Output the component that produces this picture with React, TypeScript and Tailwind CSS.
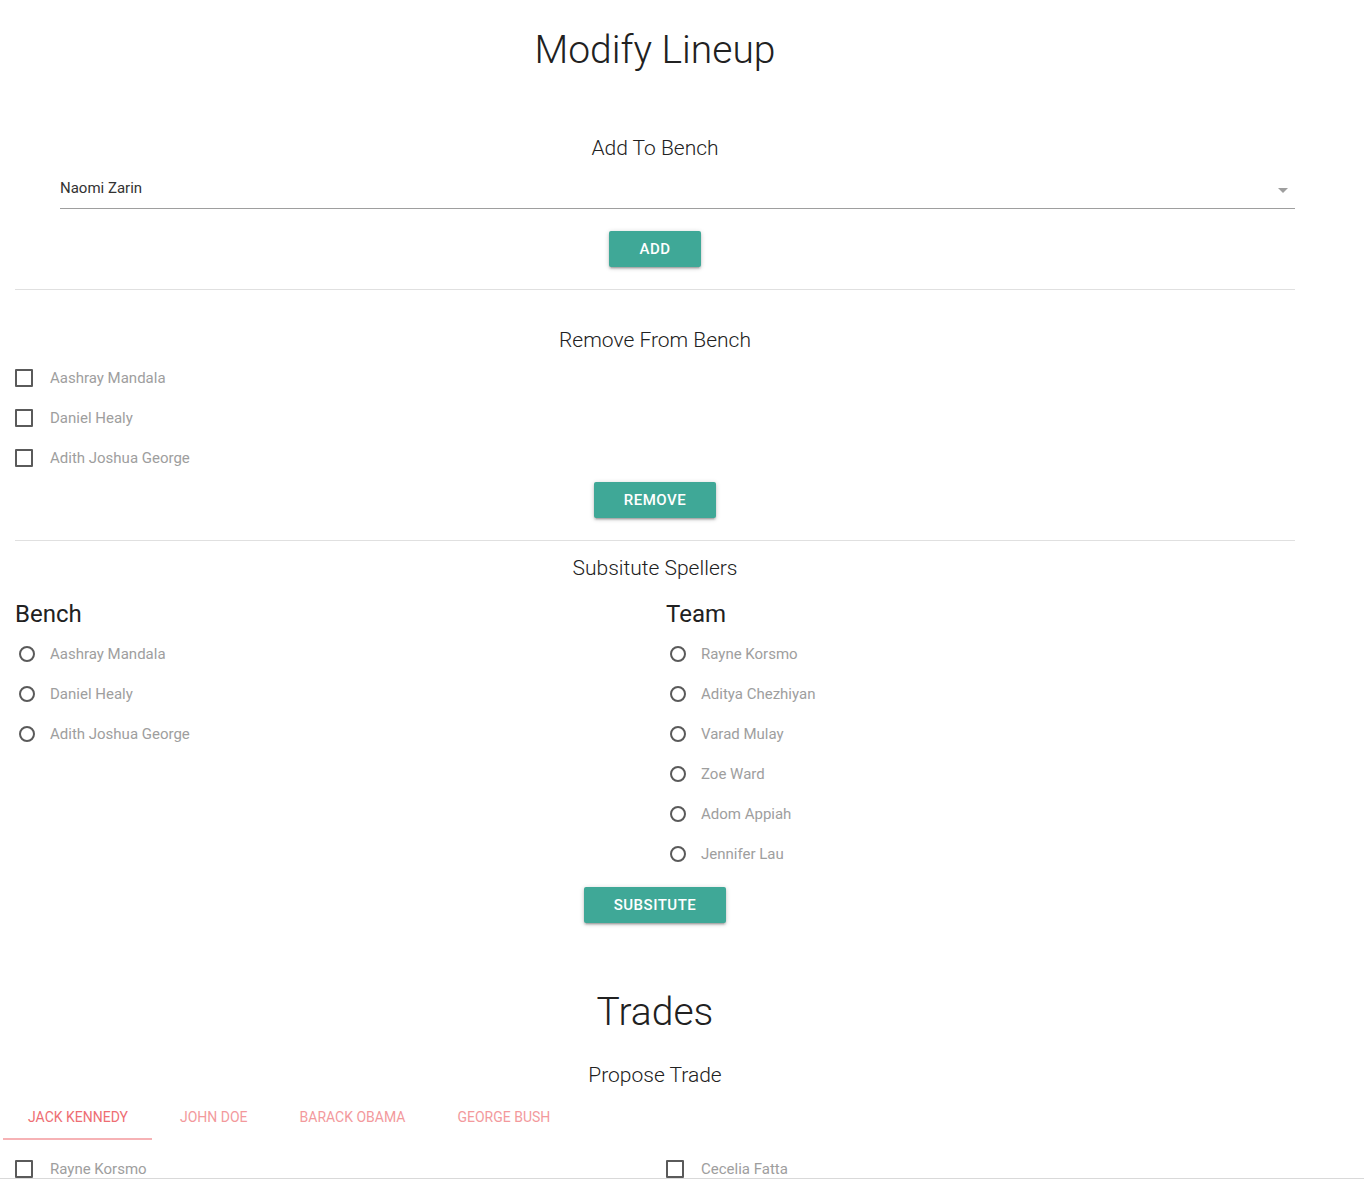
const bench = ["Aashray Mandala", "Daniel Healy", "Adith Joshua George"];
const team = ["Rayne Korsmo", "Aditya Chezhiyan", "Varad Mulay", "Zoe Ward", "Adom Appiah", "Jennifer Lau"];
const tabs = ["Jack Kennedy", "John Doe", "Barack Obama", "George Bush"];

const Checkbox = ({ label }: { label: string }) => (
  <label className="h-10 flex items-center">
    <span className="w-[18px] h-[18px] border-2 border-[#5a5a5a] rounded-[1px]" />
    <span className="ml-[17px] text-[15px] text-[#9e9e9e]">{label}</span>
  </label>
);

const Radio = ({ label }: { label: string }) => (
  <label className="h-10 flex items-center">
    <span className="ml-1 w-4 h-4 border-2 border-[#5a5a5a] rounded-full" />
    <span className="ml-[15px] text-[15px] text-[#9e9e9e]">{label}</span>
  </label>
);

const Button = ({ children }: { children: string }) => (
  <div className="flex justify-center">
    <button className="h-9 px-[30px] rounded-[2px] bg-[#3fa897] text-white text-[15px] font-medium uppercase tracking-[0.5px] shadow-[0_2px_2px_0_rgba(0,0,0,0.14),0_3px_1px_-2px_rgba(0,0,0,0.12),0_1px_5px_0_rgba(0,0,0,0.2)]">
      {children}
    </button>
  </div>
);

const Title = ({ children, className }: { children: string; className: string }) => (
  <h5 className={`flex items-center justify-center text-[21px] font-light text-[#212121] ${className}`}>{children}</h5>
);

export default function App() {
  return (
    <div className="w-[1364px] h-[1199px] bg-white font-['Roboto',sans-serif]">
      <div className="h-[1179px] overflow-hidden border-b border-[#d9d9d9]">
        <div className="w-[1280px] ml-[15px]">
          <h1 className="h-[100px] flex items-center justify-center text-[39px] font-light text-[#212121]">Modify Lineup</h1>

          <Title className="mt-[29px] h-[39px]">Add To Bench</Title>
          <div className="ml-[45px] h-[41px] border-b border-[#9e9e9e] flex items-center justify-between">
            <span className="text-[15px] text-[#333]">Naomi Zarin</span>
            <span className="mr-[7px] mt-1 w-0 h-0 border-x-[5px] border-x-transparent border-t-[5px] border-t-[#9e9e9e]" />
          </div>
          <div className="mt-[22px]">
            <Button>Add</Button>
          </div>
          <div className="mt-[22px] border-t border-[#e0e0e0]" />

          <Title className="mt-[31px] h-10">Remove From Bench</Title>
          <div className="-mt-[3px]">
            {bench.map((n) => (
              <Checkbox key={n} label={n} />
            ))}
          </div>
          <div className="mt-1">
            <Button>Remove</Button>
          </div>
          <div className="mt-[22px] border-t border-[#e0e0e0]" />

          <Title className="h-[56px]">Subsitute Spellers</Title>
          <div className="-mt-px grid grid-cols-[651px_1fr]">
            <div>
              <h4 className="h-9 flex items-center text-[24px] text-[#212121]">Bench</h4>
              <div className="mt-0.5">
                {bench.map((n) => (
                  <Radio key={n} label={n} />
                ))}
              </div>
            </div>
            <div>
              <h4 className="h-9 flex items-center text-[24px] text-[#212121]">Team</h4>
              <div className="mt-0.5">
                {team.map((n) => (
                  <Radio key={n} label={n} />
                ))}
              </div>
            </div>
          </div>
          <div className="mt-[13px]">
            <Button>Subsitute</Button>
          </div>

          <h1 className="mt-[59px] h-[60px] flex items-center justify-center text-[39px] font-light text-[#212121]">Trades</h1>
          <Title className="mt-[14px] h-10">Propose Trade</Title>

          <div className="-ml-[13px] -mt-0.5 h-[46px] flex">
            {tabs.map((t, i) => (
              <div
                key={t}
                className={`relative h-full px-[26px] flex items-center text-[14px] uppercase text-[#ee6e73] ${i === 0 ? "" : "opacity-70"}`}
              >
                {t}
                {i === 0 && <span className="absolute left-px right-[2px] bottom-0 h-0.5 bg-[#f6b2b5]" />}
              </div>
            ))}
          </div>
          <div className="mt-[9px] grid grid-cols-[651px_1fr]">
            <Checkbox label="Rayne Korsmo" />
            <Checkbox label="Cecelia Fatta" />
          </div>
        </div>
      </div>
    </div>
  );
}
